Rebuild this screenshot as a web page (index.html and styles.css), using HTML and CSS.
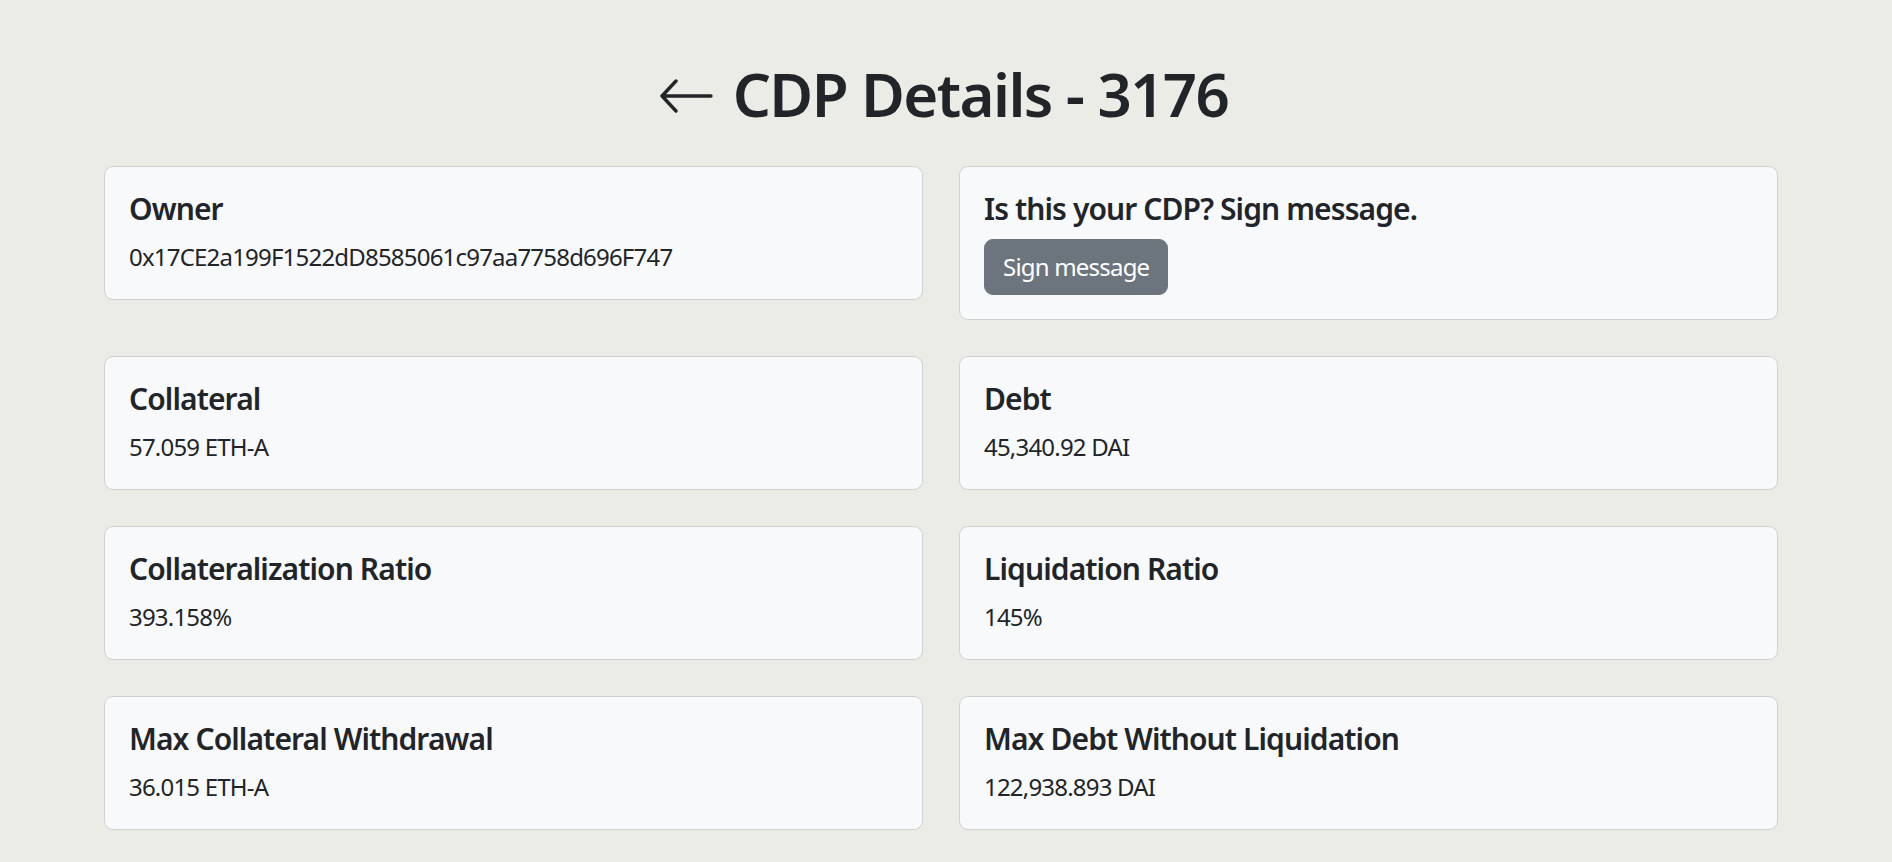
FILE: index.html
```html
<!DOCTYPE html>
<html lang="en">
<head>
<meta charset="utf-8">
<title>CDP Details - 3176</title>
<link rel="stylesheet" href="styles.css">
</head>
<body>
<div class="page">
  <h1 class="title">
    <a class="back" href="#" aria-label="Back">
      <svg class="back-icon" viewBox="0 0 54 34" width="54" height="34" aria-hidden="true">
        <path d="M3 17 H52 M17 2 L3 17 L17 32" fill="none" stroke="#212529" stroke-width="3.4" stroke-linecap="round" stroke-linejoin="round"/>
      </svg>
    </a>
    <span>CDP Details - 3176</span>
  </h1>
  <div class="grid">
    <div class="card">
      <h5 class="card-title">Owner</h5>
      <p class="card-text">0x17CE2a199F1522dD8585061c97aa7758d696F747</p>
    </div>
    <div class="card">
      <h5 class="card-title">Is this your CDP? Sign message.</h5>
      <button class="btn" type="button">Sign message</button>
    </div>
    <div class="card">
      <h5 class="card-title">Collateral</h5>
      <p class="card-text">57.059 ETH-A</p>
    </div>
    <div class="card">
      <h5 class="card-title">Debt</h5>
      <p class="card-text">45,340.92 DAI</p>
    </div>
    <div class="card">
      <h5 class="card-title">Collateralization Ratio</h5>
      <p class="card-text">393.158%</p>
    </div>
    <div class="card">
      <h5 class="card-title">Liquidation Ratio</h5>
      <p class="card-text">145%</p>
    </div>
    <div class="card">
      <h5 class="card-title">Max Collateral Withdrawal</h5>
      <p class="card-text">36.015 ETH-A</p>
    </div>
    <div class="card">
      <h5 class="card-title">Max Debt Without Liquidation</h5>
      <p class="card-text">122,938.893 DAI</p>
    </div>
  </div>
</div>
</body>
</html>
```

FILE: styles.css
```css
html, body {
  margin: 0;
  padding: 0;
  background: #ececE7;
}

body {
  font-family: "Noto Sans", "Open Sans", "Liberation Sans", sans-serif;
  font-size: 24px;
  line-height: 1.5;
  color: #212529;
  letter-spacing: -0.8px;
}

.page {
  width: 1882px;
  padding-top: 58px;
}

.title {
  margin: 0 0 36px;
  padding-left: 5px;
  font-size: 60px;
  font-weight: 600;
  line-height: 72px;
  letter-spacing: -1.6px;
  display: flex;
  justify-content: center;
  align-items: center;
  gap: 20px;
}

.back {
  display: flex;
  align-items: center;
  padding-top: 4px;
}

.back-icon {
  display: block;
}

.grid {
  width: 1674px;
  margin: 0 auto;
  display: grid;
  grid-template-columns: 1fr 1fr;
  column-gap: 36px;
  row-gap: 36px;
  align-items: start;
}

.card {
  background: #f8f9fa;
  border: 1px solid #d0d1d2;
  border-radius: 9px;
  padding: 24px;
}

.card-title {
  margin: 0 0 12px;
  font-size: 30px;
  font-weight: 600;
  line-height: 36px;
  letter-spacing: -0.9px;
}

.card-text {
  margin: 0;
  font-size: 24px;
  line-height: 36px;
}

.btn {
  display: block;
  font-family: inherit;
  font-size: 24px;
  line-height: 36px;
  letter-spacing: -0.8px;
  color: #fff;
  background: #6c757d;
  border: 1px solid #6c757d;
  border-radius: 9px;
  padding: 9px 18px;
  height: 56px;
}
```
